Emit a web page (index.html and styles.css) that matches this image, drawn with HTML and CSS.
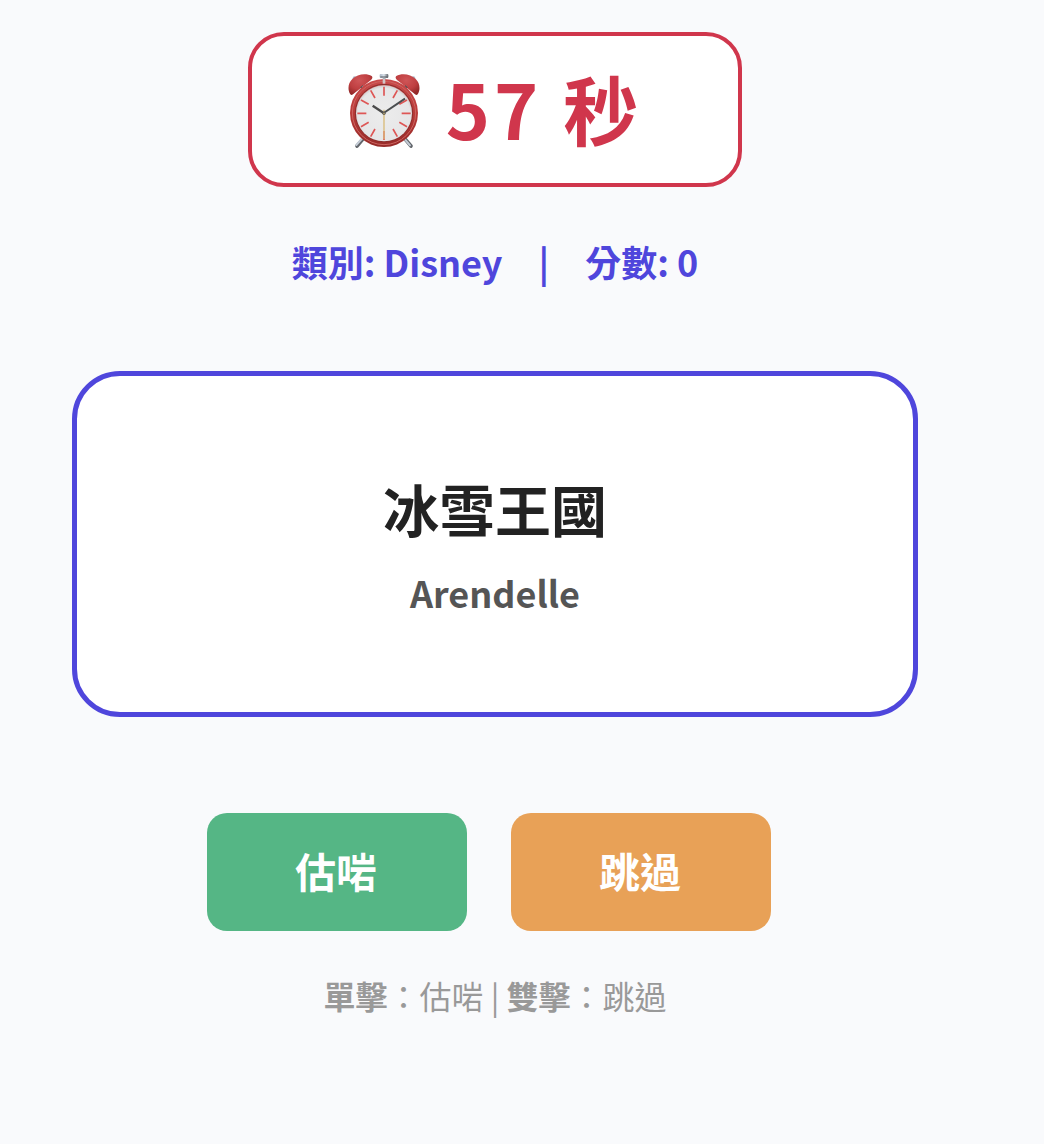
FILE: index.html
```html
<!DOCTYPE html>
<html lang="zh-Hant">
<head>
<meta charset="utf-8">
<meta name="viewport" content="width=device-width, initial-scale=1">
<title>Disney</title>
<link rel="stylesheet" href="styles.css">
</head>
<body>
<main class="game">
  <div class="timer" role="timer">
    <svg class="clock" viewBox="27 27 216 228" aria-hidden="true">
      <defs>
        <linearGradient id="rim" x1="0" y1="0" x2="0" y2="1">
          <stop offset="0" stop-color="#c9494a"/>
          <stop offset="0.5" stop-color="#b93a38"/>
          <stop offset="1" stop-color="#962a28"/>
        </linearGradient>
        <radialGradient id="bell" cx="0.45" cy="0.3" r="0.7">
          <stop offset="0" stop-color="#cf5557"/>
          <stop offset="0.6" stop-color="#bf3f41"/>
          <stop offset="1" stop-color="#932828"/>
        </radialGradient>
        <radialGradient id="face" cx="0.5" cy="0.52" r="0.52">
          <stop offset="0" stop-color="#ececec"/>
          <stop offset="0.9" stop-color="#e6e6e7"/>
          <stop offset="1" stop-color="#cfcacb"/>
        </radialGradient>
        <linearGradient id="steel" x1="0" y1="0" x2="1" y2="0">
          <stop offset="0" stop-color="#aab6c4"/>
          <stop offset="0.5" stop-color="#dde4ec"/>
          <stop offset="1" stop-color="#5e6267"/>
        </linearGradient>
      </defs>
      <path d="M78 218 54 246M192 218l24 28" stroke="#62666b" stroke-width="11" stroke-linecap="round"/>
      <path d="M75 217 52 243M190 217l23 27" stroke="#c4ccd6" stroke-width="6" stroke-linecap="round"/>
      <circle cx="47" cy="43" r="6" fill="#a9b8c8"/>
      <circle cx="223" cy="43" r="6" fill="#a9b8c8"/>
      <path d="M131 38h9v16h-9z" fill="#a9b0b8"/>
      <rect x="122" y="30" width="26" height="12" rx="3" fill="url(#steel)"/>
      <path d="M124 39h22" stroke="#53575d" stroke-width="3"/>
      <path d="M34 91C25 77 27 57 40 45 55 29 83 27 98 36c4 4 2 8-2 12L42 91c-3 3-6 3-8 0z" fill="url(#bell)"/>
      <path d="M236 91c9-14 7-34-6-46-15-16-43-18-58-9-4 4-2 8 2 12l54 43c3 3 6 3 8 0z" fill="url(#bell)"/>
      <path d="m67 67 13 13M203 67l-13 13" stroke="#50545a" stroke-width="10"/>
      <path d="m70 68 7 7M199 69l-5 5" stroke="#c5d0dc" stroke-width="4"/>
      <circle cx="135" cy="147" r="102" fill="url(#rim)"/>
      <circle cx="135" cy="147" r="95" fill="none" stroke="#cc6561" stroke-width="3"/>
      <circle cx="135" cy="147" r="86" fill="none" stroke="#8b2f2d" stroke-width="3"/>
      <circle cx="135" cy="148" r="84" fill="url(#face)"/>
      <path d="M131 45h8v14h-8z" fill="#d2c6c7"/>
      <g stroke="#de5655" stroke-width="5">
        <path d="M135 68v27M135 201v27M55 148h27M188 148h27"/>
        <path d="m95 79 13 23M162 195l13 23M66 108l23 13M181 175l23 13M204 108l-23 13M89 175l-23 13M175 79l-13 23M108 195l-13 23"/>
      </g>
      <path d="M135 137v89" stroke="#d9bb79" stroke-width="4"/>
      <path d="M101 125 135 148" stroke="#4a4a4a" stroke-width="7"/>
      <path d="M134 147 198 104" stroke="#4a4d4f" stroke-width="6"/>
      <circle cx="135" cy="148" r="5" fill="#626057"/>
      <circle cx="135" cy="148" r="2" fill="#dfc174"/>
    </svg>
    <span>57 秒</span>
  </div>

  <div class="info">
    <span>類別: Disney</span>
    <span>|</span>
    <span>分數: 0</span>
  </div>

  <section class="card">
    <h1 class="word">冰雪王國</h1>
    <p class="translation">Arendelle</p>
  </section>

  <div class="actions">
    <button class="btn btn-correct" type="button">估啱</button>
    <button class="btn btn-skip" type="button">跳過</button>
  </div>

  <p class="hint"><b>單擊</b>：估啱 | <b>雙擊</b>：跳過</p>
</main>
</body>
</html>
```
FILE: styles.css
```css
* {
  box-sizing: border-box;
}

body {
  margin: 0;
  background: #f9fafc;
  font-family: "Noto Sans CJK TC", sans-serif;
}

.game {
  display: flex;
  flex-direction: column;
  align-items: center;
  padding: 32px 126px 72px 72px;
}

.timer {
  display: flex;
  align-items: center;
  justify-content: center;
  gap: 26px;
  padding: 18px 96px 21px;
  border: 4px solid #d0364c;
  border-radius: 36px;
  background: #fff;
  color: #d0364c;
  font-size: 75px;
  font-weight: 700;
  line-height: 108px;
  letter-spacing: 4px;
  white-space: nowrap;
}

.clock {
  width: 72px;
  height: 76px;
  margin-top: 6px;
  flex: none;
}

.info {
  display: flex;
  gap: 36px;
  margin-top: 48px;
  color: #4f46dc;
  font-size: 36px;
  font-weight: 700;
  line-height: 52px;
}

.card {
  display: flex;
  flex-direction: column;
  align-items: center;
  justify-content: center;
  gap: 16px;
  width: 100%;
  min-height: 346px;
  margin-top: 84px;
  padding: 40px;
  border: 5px solid #4f46dc;
  border-radius: 48px;
  background: #fff;
}

.word {
  margin: 0;
  color: #222;
  font-size: 56px;
  font-weight: 700;
  line-height: 80px;
}

.translation {
  margin: 0;
  color: #555;
  font-size: 36px;
  font-weight: 700;
  line-height: 56px;
}

.actions {
  display: flex;
  gap: 44px;
  margin-top: 96px;
  padding-right: 12px;
}

.btn {
  width: 260px;
  height: 118px;
  padding: 0 2px 4px 0;
  border: 0;
  border-radius: 20px;
  color: #fff;
  font-family: inherit;
  font-size: 41px;
  font-weight: 700;
}

.btn-correct {
  background: #55b685;
}

.btn-skip {
  background: #e8a157;
}

.hint {
  margin: 38px 0 0;
  color: #999;
  font-size: 32px;
  line-height: 52px;
}
```
